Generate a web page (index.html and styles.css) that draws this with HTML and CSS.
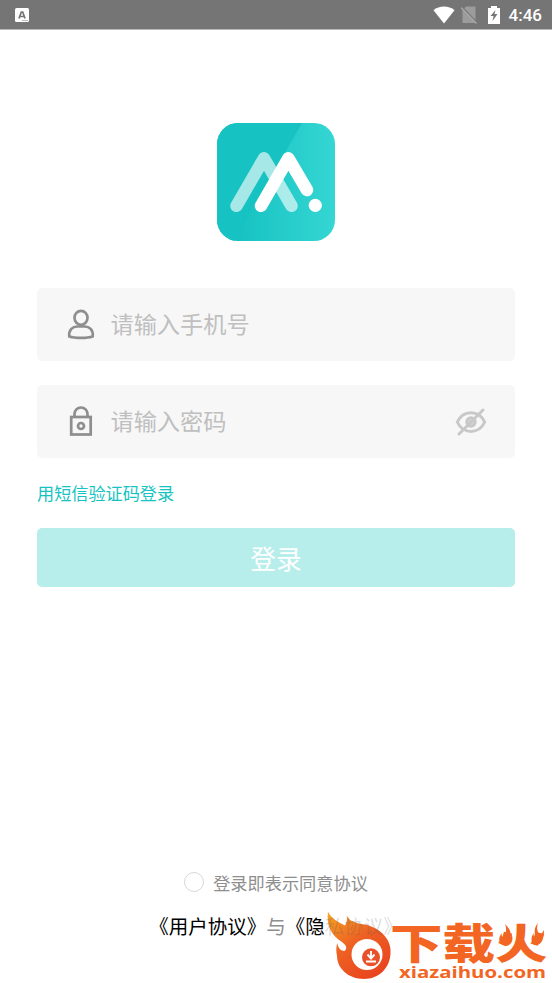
FILE: index.html
```html
<!DOCTYPE html>
<html lang="zh-CN">
<head>
<meta charset="utf-8">
<title>登录</title>
<link rel="stylesheet" href="styles.css">
</head>
<body>
<header class="status">
  <svg class="status-app" width="14" height="14" viewBox="0 0 14 14"><rect width="14" height="14" rx="1.5" fill="#fff"/><path d="M4 10.500 6.300 4h1.400L10 10.500M5 8.500h4" fill="none" stroke="#757575" stroke-width="1.700"/><path d="M7 12.500h6" stroke="#bbb"/></svg>
  <div class="status-right">
    <svg width="22" height="18" viewBox="0 0 22 18"><path d="M.5 4.200C6-.6 16-.6 21.500 4.200L11 17.500Z" fill="#fff"/></svg>
    <svg class="sim" width="17" height="18" viewBox="0 0 17 18"><path d="M5 .5h9.500V17H1.500V4Z" fill="#9c9c9c"/><path d="M1 1 17 17.500" stroke="#757575" stroke-width="1.500"/><path d="M0 1.500 15.500 17.500" stroke="#a6a6a6" stroke-width="1.400"/></svg>
    <svg class="battery" width="12" height="18" viewBox="0 0 12 18"><path d="M0 2h3V0h6v2h3v16H0Z" fill="#fff"/><path d="M7.500 4 2.500 10H5.500L4.500 15 9.500 8H6.500Z" fill="#757575"/></svg>
    <span class="time">4:46</span>
  </div>
</header>
<main class="login">
  <svg class="logo" width="118" height="118" viewBox="0 0 118 118">
    <defs>
      <linearGradient id="tile" x1="0" y1="0" x2="1" y2="0"><stop offset=".2" stop-color="#17c3c2"/><stop offset="1" stop-color="#35d6d3"/></linearGradient>
      <clipPath id="round"><rect width="118" height="118" rx="21"/></clipPath>
    </defs>
    <g clip-path="url(#round)">
      <path d="M0 0h118v118H0Z" fill="url(#tile)"/>
      <path d="M0 0H85L17 118H0Z" fill="#17c3c2"/>
    </g>
    <g fill="none" stroke="#fff" stroke-width="12.500" stroke-linecap="round" stroke-linejoin="round">
      <path d="M19.500 82.800 47 35.300 74.500 82.800" opacity=".62"/>
      <path d="M44 82.800 71.300 35.300 90 67"/>
    </g>
    <circle cx="98.300" cy="82.300" r="6.600" fill="#fff"/>
  </svg>
  <label class="field">
    <svg width="28" height="32" viewBox="0 0 28 32" fill="none" stroke="#8e8e8e" stroke-width="2.700"><ellipse cx="14" cy="8.800" rx="6.500" ry="7"/><path d="M2.300 27.500C1.500 20.700 6 17.500 10 17.500H18C22 17.500 26.500 20.700 25.700 27.500C20 29.400 8 29.400 2.300 27.500Z" stroke-linejoin="round"/></svg>
    <span class="hint">请输入手机号</span>
  </label>
  <label class="field">
    <svg width="28" height="32" viewBox="0 0 28 32" fill="none" stroke="#8e8e8e" stroke-width="2.700"><rect x="4.200" y="11" width="19.500" height="17.500"/><path d="M7.500 11V8a6.500 6.500 0 0 1 13 0v3"/><circle cx="14" cy="20" r="3"/></svg>
    <span class="hint">请输入密码</span>
    <svg class="eye" width="32" height="32" viewBox="0 0 32 32" fill="none" stroke="#c8c8c8" stroke-width="3"><path d="M2.300 16C8 3.500 24 3.500 29.700 16C24 28.500 8 28.500 2.300 16Z"/><circle cx="16" cy="16" r="4.200" fill="#d4d4d4"/><path d="M4 28 28 4" stroke-linecap="round"/></svg>
  </label>
  <a class="sms">用短信验证码登录</a>
  <button class="submit">登录</button>
  <footer class="terms">
    <label class="agree"><i class="radio"></i>登录即表示同意协议</label>
    <p class="links">《用户协议》<span class="and">与</span>《隐<span class="faded">私协议》</span></p>
  </footer>
</main>
<svg class="mark" width="232" height="83" viewBox="0 0 232 83">
  <defs><linearGradient id="fire" x1="0" y1="0" x2=".7" y2="1"><stop offset="0" stop-color="#f7a523"/><stop offset=".5" stop-color="#ee6123"/><stop offset="1" stop-color="#e94420"/></linearGradient></defs>
  <path d="M8 11.700C10 16 14 20 25 25.500C27 22 27.500 19 26.500 15C29 20.500 33 22 39 23.500C46 24.500 54 26 62 33C68 39 71 45 70.500 53C70 68 59 79 44 79C28 79 17 68 17 56C16 51 16 47 17.300 43C18 47 20 51 24.500 51C28 48 26 45 22 42C12 36 6 26 8 11.700Z" fill="url(#fire)"/>
  <circle cx="47" cy="54.500" r="15.500" fill="#fff"/><circle cx="51" cy="57.300" r="9" fill="#e9512a"/>
  <path d="M51 51v7M47.500 54.500l3.500 4 3.500-4M46 61.500h10" fill="none" stroke="#fff" stroke-width="1.900"/>
  <text class="mark-name" transform="translate(70 59.300) scale(1.050 .83)">下载火</text>
  <g fill="#f26522">
    <path d="M185 24C192 31 191 34 189 38C191 37 191 35 191 33C195 41 190 46 186 46C179 46 177 38 182 33C181 36 182 37 184 38C186 33 187 29 185 24Z"/>
    <path d="M218 23C216 29 218 31 219 36C221 35 222 33 224 30C224 40 221 45 216 45C211 45 210 37 214 33C213 36 214 37 216 38C214 32 214 28 218 23Z"/>
  </g>
  <text class="mark-url" x="79" y="78" textLength="147" lengthAdjust="spacingAndGlyphs">xiazaihuo.com</text>
</svg>
</body>
</html>
```

FILE: styles.css
```css
* { box-sizing: border-box; }
body {
  margin: 0;
  height: 983px;
  overflow: hidden;
  position: relative;
  display: flex;
  flex-direction: column;
  background: #fff;
  font-family: "Noto Sans CJK SC", sans-serif;
}
svg { display: block; flex: none; }
.status {
  height: 30px;
  flex: none;
  display: flex;
  justify-content: space-between;
  align-items: center;
  padding: 0 10px 0 15px;
  background: #757575;
  border-bottom: 1px solid #bababa;
}
.status-right { display: flex; align-items: center; }
.sim { margin-left: 6px; }
.battery { margin-left: 10px; }
.time {
  margin-left: 9px;
  color: #fff;
  font: 500 17px/20px Roboto, sans-serif;
}
.login {
  flex: 1;
  display: flex;
  flex-direction: column;
  padding: 93px 37px 0;
}
.logo { align-self: center; margin-bottom: 47px; }
.field {
  height: 73px;
  margin-bottom: 24px;
  padding: 0 28px 0 30px;
  display: flex;
  align-items: center;
  gap: 15.5px;
  border-radius: 5px;
  background: #f7f7f7;
  color: #bfbfbf;
  font-size: 23.2px;
  line-height: 34px;
}
.hint { padding-bottom: 4px; }
.eye { margin-left: auto; }
.sms {
  margin-top: -1px;
  color: #17c3c2;
  font-size: 17.15px;
  line-height: 24px;
  align-self: flex-start;
}
.submit {
  height: 59px;
  margin: 23px 0 0;
  padding: 0;
  border: 0;
  border-radius: 5px;
  background: #b7eeec;
  color: #fff;
  font: 400 25.7px/36px "Noto Sans CJK SC", sans-serif;
}
.terms {
  margin-top: 284px;
  display: flex;
  flex-direction: column;
  align-items: center;
}
.agree {
  display: flex;
  align-items: center;
  gap: 9px;
  color: #8e8e8e;
  font-size: 17.2px;
  line-height: 24px;
}
.radio {
  width: 20px;
  height: 20px;
  margin-top: -3px;
  border: 1px solid #d8d8d8;
  border-radius: 50%;
}
.links {
  margin: 17px 0 0;
  color: #000;
  font-size: 19.5px;
  line-height: 28px;
  white-space: nowrap;
}
.and { color: #8e8e8e; }
.faded {
  position: relative;
  z-index: 1;
  color: rgba(90, 90, 90, .22);
}
.mark { position: absolute; left: 320px; top: 900px; }
.mark-name {
  font-size: 50px;
  font-weight: 900;
  fill: #f26522;
}
.mark-url {
  font: 700 16px "Open Sans", sans-serif;
  fill: #f26522;
}
```
